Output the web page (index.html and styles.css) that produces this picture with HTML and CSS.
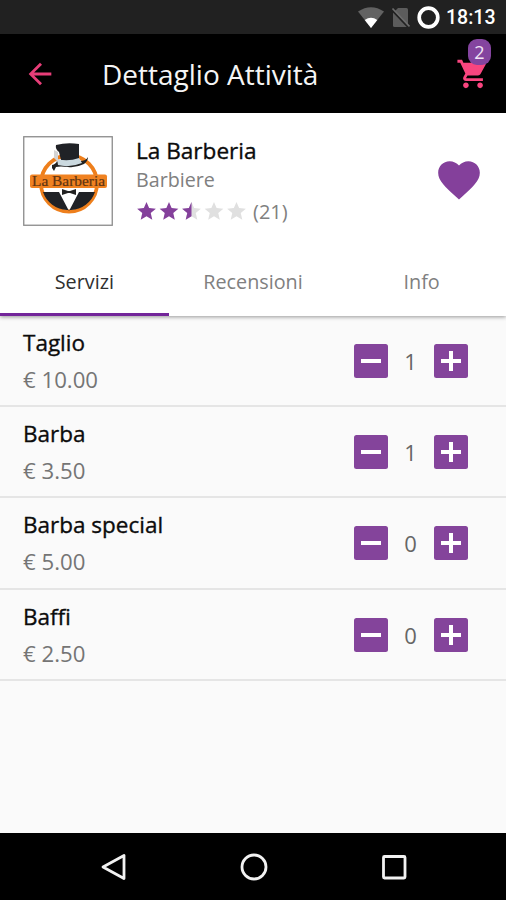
FILE: index.html
```html
<!DOCTYPE html>
<html lang="it">
<head>
<meta charset="utf-8">
<title>Dettaglio Attività</title>
<link rel="stylesheet" href="styles.css">
</head>
<body>
<svg class="defs" aria-hidden="true">
  <defs>
    <path id="star" d="M12 17.27L18.18 21l-1.64-7.03L22 9.24l-7.19-.61L12 2 9.19 8.63 2 9.24l5.46 4.73L5.82 21z"/>
    <symbol id="minus" viewBox="0 0 34 34"><rect width="34" height="34" rx="2.5" fill="#84449b"/><path d="M7 17h20" stroke="#fff" stroke-width="4"/></symbol>
    <symbol id="plus" viewBox="0 0 34 34"><rect width="34" height="34" rx="2.5" fill="#84449b"/><path d="M7 17h20M17 7v20" stroke="#fff" stroke-width="4"/></symbol>
  </defs>
</svg>
<div class="status">
  <svg class="wifi" viewBox="0 0 26 21"><path d="M0 4.5Q13-4 26 4.5L13 21z" fill="#626262"/><path d="M6.700 13Q13 8.600 19.300 13L13 21z" fill="#fff"/></svg>
  <svg class="sim" viewBox="0 0 19 21"><path d="M7 1h8.500q1.500 0 1.500 1.500V20H3.500Q2 20 2 18.500V6z" fill="#5c5c5c"/><path d="M.5 2.500l17 18" stroke="#212121" stroke-width="2"/><path d="M1.500 1.500l17 18" stroke="#6c6c6c" stroke-width="1.700"/></svg>
  <svg class="ring" viewBox="0 0 23 23"><circle cx="11.500" cy="11.500" r="9.300" fill="none" stroke="#fff" stroke-width="3.700"/></svg>
  <span class="clock">18:13</span>
</div>
<header class="appbar">
  <svg class="back" viewBox="0 0 24 24"><path fill="#e83e79" d="M20 11H7.830l5.590-5.590L12 4l-8 8 8 8 1.410-1.410L7.830 13H20z"/></svg>
  <h1>Dettaglio Attività</h1>
  <div class="cart">
    <svg viewBox="0 0 24 24"><path fill="#f9457f" d="M7 18c-1.100 0-1.990.9-1.990 2S5.900 22 7 22s2-.9 2-2-.9-2-2-2zM1 2v2h2l3.600 7.590-1.350 2.450c-.16.28-.25.61-.25.96 0 1.100.9 2 2 2h12v-2H7.420c-.14 0-.25-.11-.25-.25l.03-.12.9-1.630h7.450c.75 0 1.410-.41 1.750-1.030l3.580-6.490A1 1 0 0 0 20 4H5.210l-.94-2H1zm16 16c-1.100 0-1.990.9-1.990 2s.89 2 1.990 2 2-.9 2-2-.9-2-2-2z"/></svg>
    <span class="badge">2</span>
  </div>
</header>
<section class="profile">
  <svg class="logo" viewBox="0 0 90 90">
    <rect x=".75" y=".75" width="88.500" height="88.500" fill="#fff" stroke="#8b8b8b" stroke-width="1.300"/>
    <circle cx="46" cy="47.500" r="28" fill="#fff" stroke="#ee7f1c" stroke-width="3.800"/>
    <path d="M20 56h16l10 19L56 56h16A26.500 26.500 0 0 1 48 74h-4A26.500 26.500 0 0 1 20 56z" fill="#202226"/>
    <path d="M29 29q4-1 5-4h23q6 0 8-4 0 4-4 7-8 4-16 3-8-1-12 0l-2 4-2-3z" fill="#222"/>
    <path d="M33 9q11-3 23-1v16q-9 3-18 0l-2-8q-4-3-3-7z" fill="#202226"/>
    <path d="M34 23q11 3 22-1l3 5q-12 5-24 2z" fill="#cbd9df"/>
    <path d="M31 14l4 2v10l-4-4z" fill="#d4d4d4"/>
    <rect x="7" y="38.500" width="77" height="13.500" rx="2" fill="#f08221"/>
    <text x="9" y="50" textLength="73" lengthAdjust="spacingAndGlyphs" class="logo-name">La Barberia</text>
    <path d="M39 53l6 2h2l6-2v6l-6-2h-2l-6 2z" fill="#222"/>
  </svg>
  <div class="about">
    <h2>La Barberia</h2>
    <p class="kind">Barbiere</p>
    <div class="rating">
      <svg viewBox="0 0 120 24"><use href="#star" fill="#84409b"/><use href="#star" x="24" fill="#84409b"/><use href="#star" x="48" fill="#e0e0e0"/><path d="M60 2v15.270L53.820 21l1.640-7.030L50 9.240l7.190-.61z" fill="#84409b"/><use href="#star" x="72" fill="#e0e0e0"/><use href="#star" x="96" fill="#e0e0e0"/></svg>
      <span>(21)</span>
    </div>
  </div>
  <svg class="heart" viewBox="0 0 24 24"><path fill="#84409b" d="M12 21.350l-1.450-1.320C5.400 15.360 2 12.280 2 8.500 2 5.420 4.420 3 7.500 3c1.740 0 3.410.81 4.500 2.090C13.090 3.810 14.760 3 16.500 3 19.580 3 22 5.420 22 8.500c0 3.780-3.400 6.860-8.550 11.540L12 21.350z"/></svg>
</section>
<nav class="tabs"><span class="tab active">Servizi</span><span class="tab">Recensioni</span><span class="tab">Info</span></nav>
<main class="services">
  <div class="row"><div class="item"><h3>Taglio</h3><p>€ 10.00</p></div><div class="stepper"><svg><use href="#minus"/></svg><span>1</span><svg><use href="#plus"/></svg></div></div>
  <div class="row"><div class="item"><h3>Barba</h3><p>€ 3.50</p></div><div class="stepper"><svg><use href="#minus"/></svg><span>1</span><svg><use href="#plus"/></svg></div></div>
  <div class="row"><div class="item"><h3>Barba special</h3><p>€ 5.00</p></div><div class="stepper"><svg><use href="#minus"/></svg><span>0</span><svg><use href="#plus"/></svg></div></div>
  <div class="row"><div class="item"><h3>Baffi</h3><p>€ 2.50</p></div><div class="stepper"><svg><use href="#minus"/></svg><span>0</span><svg><use href="#plus"/></svg></div></div>
</main>
<footer class="navbar">
  <svg viewBox="0 0 28 28"><path d="M3 14L24 2.500v23z"/></svg>
  <svg viewBox="0 0 28 28"><circle cx="14" cy="14" r="12"/></svg>
  <svg viewBox="0 0 28 28"><rect x="3.500" y="3.500" width="21.500" height="21.500" rx="1"/></svg>
</footer>
</body>
</html>
```
FILE: styles.css
```css
* { box-sizing: border-box; margin: 0; padding: 0; }
body {
  width: 506px;
  height: 900px;
  display: flex;
  flex-direction: column;
  overflow: hidden;
  background: #fafafa;
  font-family: "Open Sans", sans-serif;
  color: #0c0c0c;
}
svg { display: block; flex: none; }
h1, h2, h3 { font-weight: 400; }
.defs { width: 0; height: 0; position: absolute; }

.status {
  height: 34px;
  flex: none;
  display: flex;
  align-items: center;
  justify-content: flex-end;
  padding-right: 11px;
  background: #212121;
}
.wifi { width: 26px; height: 21px; margin-right: 7px; }
.sim { width: 19px; height: 21px; margin-right: 7px; }
.ring { width: 23px; height: 23px; margin-right: 6px; }
.clock {
  width: 49px;
  padding-top: 2px;
  font: 500 19.5px/34px Roboto, sans-serif;
  color: #fff;
  white-space: nowrap;
}

.appbar {
  height: 79px;
  flex: none;
  display: flex;
  align-items: center;
  padding: 0 16px 0 23px;
  background: #000;
}
.back { width: 34px; height: 34px; }
h1 { flex: 1; margin-left: 45px; font-size: 28px; line-height: 40px; color: #f5f5f5; }
.cart { position: relative; width: 34px; height: 34px; }
.cart svg { width: 34px; height: 34px; }
.badge {
  position: absolute;
  left: 12px;
  top: -18px;
  width: 23px;
  height: 26px;
  border-radius: 9px;
  background: #84449f;
  color: #f1e4f5;
  font-size: 18px;
  line-height: 27px;
  text-align: center;
}

.profile {
  height: 136px;
  flex: none;
  display: flex;
  align-items: flex-start;
  padding: 23px 22px 0 23px;
  background: #fff;
}
.logo { width: 90px; height: 90px; }
.logo-name { font: 15px "Liberation Serif", serif; fill: #603412; stroke: #603412; stroke-width: .2px; }
.about { flex: 1; margin-left: 23px; }
h2 { font-size: 22.6px; line-height: 29px; -webkit-text-stroke: .35px; }
.kind { padding-top: 1px; font-size: 19.7px; line-height: 28px; color: #808080; }
.rating { display: flex; align-items: center; height: 34px; }
.rating svg { width: 113px; height: 22.5px; margin-left: -1px; }
.rating span { margin-left: 5px; padding-top: 2px; font-size: 20px; line-height: 34px; color: #808080; }
.heart { width: 50px; height: 50px; margin-top: 19px; }

.tabs {
  position: relative;
  height: 66.5px;
  flex: none;
  display: grid;
  grid-template-columns: repeat(3, 1fr);
  background: #fff;
  box-shadow: 0 1px 4px rgba(0, 0, 0, .4);
  clip-path: inset(0 0 -6px 0);
}
.tab { text-align: center; font-size: 19.8px; line-height: 66px; height: 66.5px; color: #808080; }
.active { color: #303030; border-bottom: 3px solid #73269a; }

.services { flex: 1; }
.row {
  height: 91.4px;
  display: flex;
  align-items: center;
  justify-content: space-between;
  padding: 1px 38px 0 23px;
  border-bottom: 2px solid #e5e5e5;
}
.item { padding-top: 1px; }
h3 { font-size: 22.5px; line-height: 36px; -webkit-text-stroke: .35px; }
.item p { font-size: 22.2px; line-height: 37px; color: #757575; }
.stepper { display: flex; align-items: center; font-size: 22px; color: #666; }
.stepper svg { width: 34px; height: 34px; }
.stepper span { width: 46px; padding-right: 1px; text-align: center; line-height: 34px; }

.navbar {
  height: 67px;
  flex: none;
  display: flex;
  align-items: center;
  justify-content: space-between;
  padding: 0 98px 0 100px;
  background: #000;
}
.navbar svg { width: 28px; height: 28px; fill: none; stroke: #f2f2f2; stroke-width: 2.8; stroke-linejoin: round; }
```
